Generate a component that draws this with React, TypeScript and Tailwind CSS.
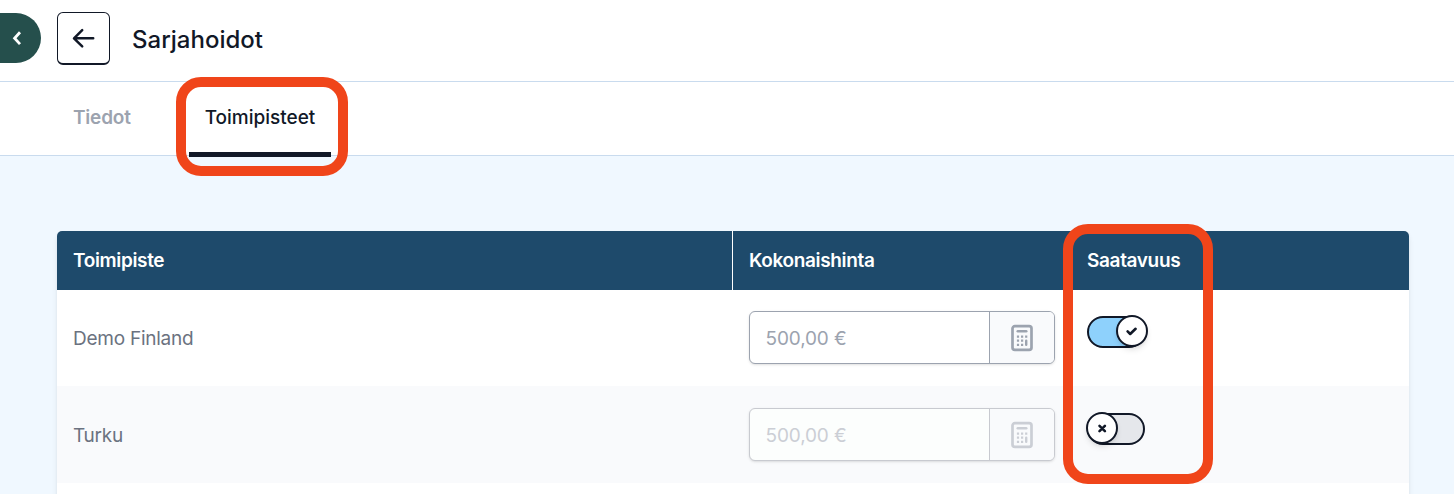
interface Location {
  name: string;
  price: string;
  available: boolean;
}

const LOCATIONS: Location[] = [
  { name: 'Demo Finland', price: '500,00 €', available: true },
  { name: 'Turku',        price: '500,00 €', available: false },
];

function ChevronLeftIcon() {
  return (
    <svg width="10" height="16" viewBox="0 0 10 16" fill="none" stroke="currentColor" strokeWidth="2.8">
      <path d="M8 2.3 2.6 8.2 8 14.1" />
    </svg>
  );
}

function ArrowLeftIcon() {
  return (
    <svg width="24" height="24" viewBox="0 0 24 24" fill="none" stroke="currentColor" strokeWidth="2.5" strokeLinecap="round" strokeLinejoin="round">
      <path d="M21.2 12.3H2.2M10.2 4.2 2 12.3l8.2 8.1" />
    </svg>
  );
}

function CalculatorIcon() {
  return (
    <svg width="22" height="28" viewBox="0 0 22 28" fill="none" stroke="currentColor">
      <rect x="1.5" y="2.2" width="19" height="23.6" rx="2.4" strokeWidth="2.7" />
      <path d="M6.8 7.3h8.4" strokeWidth="2.6" strokeLinecap="round" />
      <path d="M5.9 12.6h10.4M5.9 16.7h6.3M5.9 20.8h6.3" strokeWidth="2.2" strokeDasharray="2.2 1.9" />
      <path d="M15.2 16.8v4" strokeWidth="2.4" strokeLinecap="round" />
    </svg>
  );
}

function PriceInput({ value, disabled }: { value: string; disabled: boolean }) {
  const tone = disabled ? 'border-[#c8cad0] bg-[#fcfefd] text-[#cbced5]' : 'border-[#9ca3af] bg-white text-[#9ca3af]';
  return (
    <div className={`flex h-[53px] w-[306px] overflow-hidden rounded-md border shadow-sm ${tone}`}>
      <div className="flex flex-1 items-center pt-[3px] pl-[15.5px] tracking-[-0.13px]">{value}</div>
      <div className={`flex w-[65px] items-center justify-center border-l bg-[#f9fafc] ${disabled ? 'border-[#c8cad0]' : 'border-[#9ca3af]'}`}>
        <CalculatorIcon />
      </div>
    </div>
  );
}

function Toggle({ on }: { on: boolean }) {
  return (
    <div className={`relative h-8 w-[58px] rounded-full border-2 border-[#111827] ${on ? 'bg-[#8ed1fc]' : 'bg-[#e5e7eb]'}`}>
      <span className={`absolute -top-[3px] flex size-8 items-center justify-center rounded-full border-2 border-[#111827] bg-white shadow-md ${on ? 'left-[27px]' : '-left-[3px]'}`}>
        <svg width="14" height="14" viewBox="0 0 14 14" fill="none" stroke="#111827" strokeWidth="2.6" strokeLinecap="round" strokeLinejoin="round">
          {on ? <path d="m2.6 7.4 2.6 2.6 5.4-5.2" /> : <path d="m4.5 4.9 5.4 5.2m0-5.2-5.4 5.2" />}
        </svg>
      </span>
    </div>
  );
}

function Header() {
  return (
    <header className="flex h-[82px] border-b border-[#c9dbee] bg-white">
      <button className="mt-[13px] flex h-[50px] w-[41px] items-center rounded-r-full bg-[#254f4c] pl-3 text-white">
        <ChevronLeftIcon />
      </button>
      <button className="mt-3 ml-4 flex size-[53px] items-center justify-center rounded-md border border-b-2 border-[#111827]">
        <ArrowLeftIcon />
      </button>
      <h1 className="mt-[22px] ml-[22px] text-[24px] leading-9 font-medium">Sarjahoidot</h1>
    </header>
  );
}

function Tabs() {
  return (
    <nav className="flex h-[74px] border-b border-[#c9dbee] bg-white pl-[57px] font-medium">
      <a className="flex h-[73px] w-[90px] items-center pl-4 font-semibold tracking-[-0.2px] text-[#9ca3af]">Tiedot</a>
      <div className="relative ml-[42px]">
        <a className="flex h-[75px] w-[142px] items-center justify-center border-b-5 border-[#111827] pt-[3px]">Toimipisteet</a>
        <span className="absolute -top-[5px] -left-[13px] h-[99px] w-[172px] rounded-[25px] border-10 border-[#f0451a]" />
      </div>
    </nav>
  );
}

function LocationTable() {
  return (
    <section className="mr-[45px] ml-[57px] rounded-t-[5px] bg-white shadow-md">
      <div className="grid h-[59px] grid-cols-[676px_338px_1fr] rounded-t-[5px] bg-[#1e4a6b] font-semibold tracking-[-0.35px] text-white">
        <div className="flex items-center border-r border-white pt-0.5 pl-4">Toimipiste</div>
        <div className="flex items-center pt-0.5 pl-4">Kokonaishinta</div>
        <div className="relative flex items-center pt-0.5 pl-4">
          Saatavuus
          <span className="absolute -top-[7px] -left-2 z-10 h-[260px] w-[150px] rounded-[25px] border-10 border-[#f0451a]" />
        </div>
      </div>
      {LOCATIONS.map((location) => (
        <div
          key={location.name}
          className="grid h-24 grid-cols-[676px_338px_1fr] text-[#6b7280] odd:h-[97px] odd:bg-[#f9fafc] odd:pt-px"
        >
          <div className="flex items-center pt-0.5 pl-4 tracking-[-0.25px]">{location.name}</div>
          <div className="pt-[21px] pl-4">
            <PriceInput value={location.price} disabled={!location.available} />
          </div>
          <div className="pt-[26px] pl-4">
            <Toggle on={location.available} />
          </div>
        </div>
      ))}
      <div className="h-10" />
    </section>
  );
}

export default function App() {
  return (
    <div className="h-[494px] overflow-hidden bg-[#f0f8ff] font-['Inter',sans-serif] text-[19px] text-[#111827]">
      <Header />
      <Tabs />
      <main className="pt-[75px]">
        <LocationTable />
      </main>
    </div>
  );
}
